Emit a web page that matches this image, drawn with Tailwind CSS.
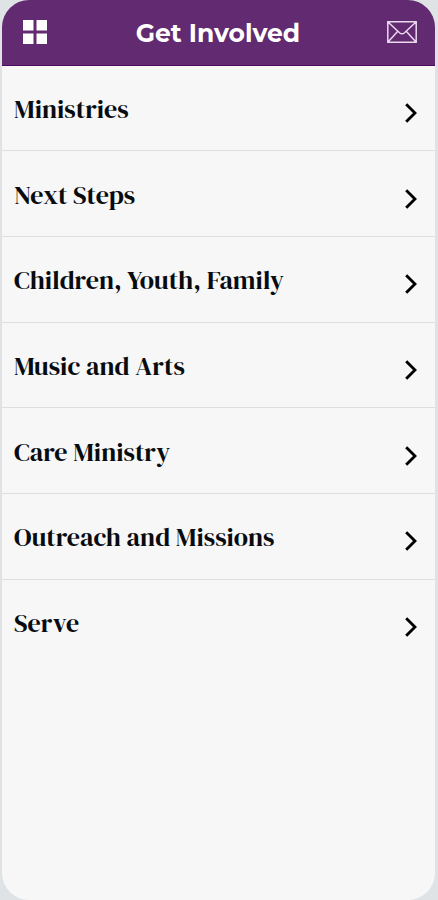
<!DOCTYPE html>
<html lang="en">
<head>
    <meta charset="UTF-8">
    <meta name="viewport" content="width=device-width, initial-scale=1.0">
    <title>Get Involved</title>
    <script src="https://cdn.jsdelivr.net/npm/@tailwindcss/browser@4"></script>
</head>
<body class="h-[900px] overflow-hidden bg-[#dfe3e5] pr-[3px] pl-0.5">
    <div class="flex h-full flex-col overflow-hidden rounded-[27px] bg-[#f7f7f7]">
        <header class="flex h-[65.5px] shrink-0 items-center justify-between border-b border-[#4b0962] bg-[#622a70] pr-[18px] pl-[21px]">
            <button type="button" aria-label="Menu" class="pb-px">
                <svg class="h-6 w-6" viewBox="0 0 24 24" fill="#fff">
                    <path d="M0 0h10.5v10.5H0zM13.5 0H24v10.5H13.5zM0 13.5h10.5V24H0zM13.5 13.5H24V24H13.5z"/>
                </svg>
            </button>
            <h1 class="pt-px pl-0.5 font-['Montserrat','Inter',sans-serif] text-[25px] leading-8 font-bold whitespace-nowrap text-white">Get Involved</h1>
            <button type="button" aria-label="Messages">
                <svg class="h-[22px] w-[30px]" viewBox="0 0 30 22" fill="none" stroke="#ead9ee" stroke-width="1.5">
                    <path d="M.8.8h28.4v20.4H.8zM1 1l11.5 10.7q2.5 2.2 5 0L29 1M1 21l9.8-10.8M29 21l-9.8-10.8"/>
                </svg>
            </button>
        </header>

        <nav class="font-['DM_Serif_Display','DM_Serif_Text','Playfair_Display','Liberation_Serif',serif] text-[26.1px] leading-8 font-normal text-[#080c10]">
            <a href="#" class="flex h-[85.7px] items-center justify-between border-b border-[#dedee0] pt-0.5 pr-[18px] pl-3">
                <span class="whitespace-nowrap">Ministries</span>
                <svg class="mt-2 h-5 w-3" viewBox="0 0 12 20" fill="none" stroke="#000" stroke-width="2.9"><path d="M1.2 1.2L10 10l-8.8 8.8"/></svg>
            </a>
            <a href="#" class="flex h-[85.7px] items-center justify-between border-b border-[#dedee0] pt-0.5 pr-[18px] pl-3">
                <span class="whitespace-nowrap">Next Steps</span>
                <svg class="mt-2 h-5 w-3" viewBox="0 0 12 20" fill="none" stroke="#000" stroke-width="2.9"><path d="M1.2 1.2L10 10l-8.8 8.8"/></svg>
            </a>
            <a href="#" class="flex h-[85.7px] items-center justify-between border-b border-[#dedee0] pt-0.5 pr-[18px] pl-3">
                <span class="whitespace-nowrap">Children, Youth, Family</span>
                <svg class="mt-2 h-5 w-3" viewBox="0 0 12 20" fill="none" stroke="#000" stroke-width="2.9"><path d="M1.2 1.2L10 10l-8.8 8.8"/></svg>
            </a>
            <a href="#" class="flex h-[85.7px] items-center justify-between border-b border-[#dedee0] pt-0.5 pr-[18px] pl-3">
                <span class="whitespace-nowrap">Music and Arts</span>
                <svg class="mt-2 h-5 w-3" viewBox="0 0 12 20" fill="none" stroke="#000" stroke-width="2.9"><path d="M1.2 1.2L10 10l-8.8 8.8"/></svg>
            </a>
            <a href="#" class="flex h-[85.7px] items-center justify-between border-b border-[#dedee0] pt-0.5 pr-[18px] pl-3">
                <span class="whitespace-nowrap">Care Ministry</span>
                <svg class="mt-2 h-5 w-3" viewBox="0 0 12 20" fill="none" stroke="#000" stroke-width="2.9"><path d="M1.2 1.2L10 10l-8.8 8.8"/></svg>
            </a>
            <a href="#" class="flex h-[85.7px] items-center justify-between border-b border-[#dedee0] pt-0.5 pr-[18px] pl-3">
                <span class="whitespace-nowrap">Outreach and Missions</span>
                <svg class="mt-2 h-5 w-3" viewBox="0 0 12 20" fill="none" stroke="#000" stroke-width="2.9"><path d="M1.2 1.2L10 10l-8.8 8.8"/></svg>
            </a>
            <a href="#" class="flex h-[85.7px] items-center justify-between pt-0.5 pr-[18px] pl-3">
                <span class="whitespace-nowrap">Serve</span>
                <svg class="mt-2 h-5 w-3" viewBox="0 0 12 20" fill="none" stroke="#000" stroke-width="2.9"><path d="M1.2 1.2L10 10l-8.8 8.8"/></svg>
            </a>
        </nav>
    </div>
</body>
</html>
